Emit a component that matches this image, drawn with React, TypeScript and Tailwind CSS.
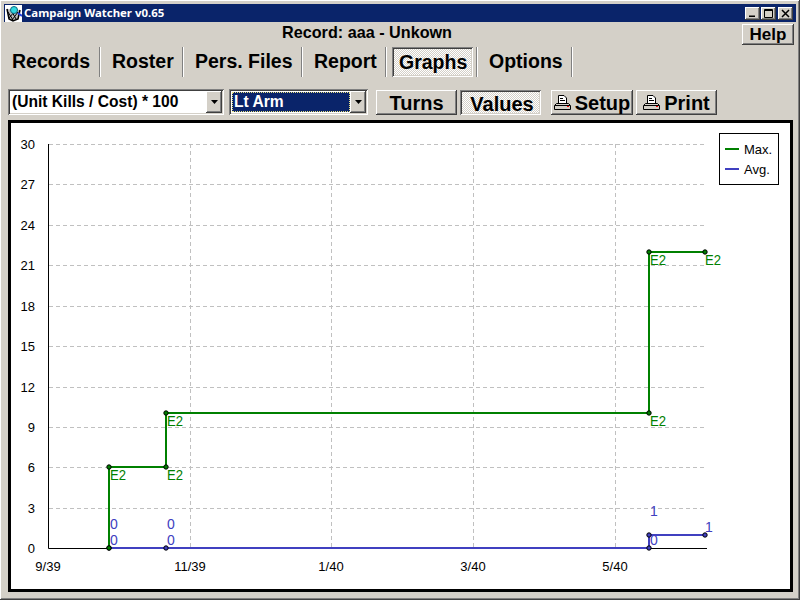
const raised = "shadow-[inset_-1px_-1px_#404040,inset_1px_1px_#ffffff,inset_-2px_-2px_#808080,inset_2px_2px_#d4d0c8]";
const sunken = "shadow-[inset_1px_1px_#808080,inset_-1px_-1px_#ffffff,inset_2px_2px_#404040,inset_-2px_-2px_#d4d0c8]";
const dither = "bg-[repeating-conic-gradient(#ffffff_0_25%,#d4d0c8_0_50%)] bg-[length:2px_2px]";
const bold = "font-['Liberation_Sans',Arial,sans-serif] font-bold text-black";

function Printer() {
  return (
    <svg width="17" height="15" viewBox="0 0 17 15" className="shrink-0">
      <path d="M4.5 .5H10L12.5 3V8.5H4.5Z" fill="#fff" stroke="#000" />
      <path d="M6 3.5H9M6 5.5H11" stroke="#000" />
      <path d="M2.5 8.5H14.5L16.5 10.5V14.5H.5V10.5Z" fill="#d4d0c8" stroke="#000" />
      <path d="M1 10.5H16" stroke="#000" />
      <rect x="13" y="11" width="2" height="1" fill="#f00" />
    </svg>
  );
}

function AppIcon() {
  return (
    <svg width="17" height="17" viewBox="0 0 17 17" className="shrink-0">
      <rect width="17" height="17" fill="#fff" />
      <path d="M2 4L4 14L8 16L13 14L15 5" fill="#bbb" stroke="#000" strokeWidth="1.5" />
      <path d="M3 7L8 15M6 5L11 14M13 7L7 15M10 6L4 13" stroke="#000" />
      <circle cx="9" cy="5" r="3.5" fill="#30d8e0" stroke="#106880" />
      <path d="M13 8L17 11" stroke="#2040e0" strokeWidth="2" />
    </svg>
  );
}

function CaptionButton({ children }: { children: React.ReactNode }) {
  return (
    <div className={`w-[15px] h-[13px] bg-[#d4d0c8] ${raised} flex items-center justify-center`}>
      <svg width="15" height="13" viewBox="0 0 15 13">{children}</svg>
    </div>
  );
}

function Combo({ text, width, selected }: { text: string; width: string; selected?: boolean }) {
  return (
    <div className={`${width} h-[26px] bg-white ${sunken} p-[2px] flex`}>
      <div className={`flex-1 flex items-center text-[15.6px] leading-none pl-[2px] ${bold} ${selected ? "!text-white bg-[#0a246a] outline-1 outline-dotted outline-[#e8e080] -outline-offset-1 ml-[1px] my-[1px]" : ""}`}>
        {text}
      </div>
      <div className={`w-[16px] bg-[#d4d0c8] ${raised} flex items-center justify-center`}>
        <svg width="7" height="4" viewBox="0 0 7 4"><path d="M0 0H7L3.5 4Z" fill="#000" /></svg>
      </div>
    </div>
  );
}

function Btn({ children, width, ml, active }: { children: React.ReactNode; width: string; ml: string; active?: boolean }) {
  return (
    <div className={`${width} ${ml} h-[25px] flex items-center justify-center gap-[4px] text-[20px] leading-none ${bold} ${active ? `${dither} ${sunken} pl-[3px] pt-[3px]` : `bg-[#d4d0c8] ${raised} pt-[1px]`}`}>
      {children}
    </div>
  );
}

const tabs = [
  { t: "Records", w: "w-[93px]", pad: "pl-[4px]" },
  { t: "Roster", w: "w-[83px]", pad: "pl-[11px]" },
  { t: "Pers. Files", w: "w-[119px]", pad: "pl-[11px]" },
  { t: "Report", w: "w-[84px]", pad: "pl-[11px]" },
  { t: "Graphs", w: "w-[91px]", pad: "pl-[7px] ml-[5px]", active: true },
  { t: "Options", w: "w-[95px]", pad: "pl-[11px]" },
];

const yTicks = [30, 27, 24, 21, 18, 15, 12, 9, 6, 3, 0];
const yPos = [144, 184, 225, 265, 306, 346, 387, 427, 467, 508, 548];
const xTicks = [
  { x: 48, t: "9/39" },
  { x: 190, t: "11/39" },
  { x: 331, t: "1/40" },
  { x: 473, t: "3/40" },
  { x: 615, t: "5/40" },
];
const green = "#008000";
const blue = "#4040c0";
const gPts = [[109, 467], [166, 467], [166, 413], [649, 413], [649, 252], [705, 252]];
const bPts = [[109, 548], [166, 548], [649, 548], [649, 535], [705, 535]];
const gLabels = [[110, 480], [167, 480], [167, 426], [650, 426], [650, 265], [705, 265]];
const bLabels: [number, number, string][] = [
  [110, 529, "0"], [110, 545, "0"], [167, 529, "0"], [167, 545, "0"],
  [650, 516, "1"], [705, 532, "1"], [650, 545, "0"],
];

function Chart() {
  return (
    <svg viewBox="11 123 779 466" width="779" height="466" className="block" fontFamily="'Liberation Sans', Arial, sans-serif" fontSize="13">
      <rect x="11" y="123" width="779" height="466" fill="#fff" />
      {yPos.slice(0, -1).map((y) => (
        <path key={y} d={`M49 ${y + 0.5}H705`} stroke="#c0c0c0" strokeDasharray="4 3" />
      ))}
      {xTicks.slice(1).map((t) => (
        <path key={t.x} d={`M${t.x + 0.5} 144V548`} stroke="#c0c0c0" strokeDasharray="4 3" />
      ))}
      <path d="M48.5 144V548.5H707" stroke="#000" fill="none" />
      {yTicks.map((v, i) => (
        <text key={v} x="35" y={yPos[i] + 5} textAnchor="end" fill="#000">{v}</text>
      ))}
      {xTicks.map((t) => (
        <text key={t.x} x={t.x} y="571" textAnchor="middle" fill="#000">{t.t}</text>
      ))}
      <path d="M109 548V467H166V413H649V252H705" fill="none" stroke={green} strokeWidth="2" />
      <path d="M109 548H649V535H705" fill="none" stroke={blue} strokeWidth="2" />
      {bPts.map(([x, y]) => (
        <circle key={`b${x}${y}`} cx={x} cy={y} r="2.2" fill={blue} stroke="#000" />
      ))}
      {gPts.map(([x, y]) => (
        <circle key={`g${x}${y}`} cx={x} cy={y} r="2.2" fill={green} stroke="#000" />
      ))}
      <circle cx="109" cy="548" r="2.2" fill={green} stroke="#000" />
      {gLabels.map(([x, y]) => (
        <text key={`l${x}${y}`} x={x} y={y} fill={green} fontSize="14" textLength="16" lengthAdjust="spacingAndGlyphs">E2</text>
      ))}
      {bLabels.map(([x, y, t]) => (
        <text key={`m${x}${y}`} x={x} y={y} fill={blue} fontSize="14">{t}</text>
      ))}
      <rect x="719.5" y="133.5" width="59" height="51" fill="#fff" stroke="#000" />
      <path d="M725 149H739" stroke={green} strokeWidth="2" />
      <path d="M725 169H739" stroke={blue} strokeWidth="2" />
      <text x="744" y="154" fill="#000">Max.</text>
      <text x="744" y="174" fill="#000">Avg.</text>
    </svg>
  );
}

export default function App() {
  return (
    <div className={`w-[800px] h-[600px] bg-[#d4d0c8] p-[4px] overflow-hidden ${raised}`}>
      <div className="h-[18px] bg-[#0a246a] flex items-center pl-[1px] pr-[3px]">
        <AppIcon />
        <span className="ml-[2px] text-[11.4px] leading-none text-white font-bold font-['Noto_Sans',sans-serif]">Campaign Watcher v0.65</span>
        <div className="ml-auto flex">
          <CaptionButton><path d="M4 10H10V8.500H4Z" fill="#000" /></CaptionButton>
          <div className="w-[1px]" />
          <CaptionButton><path d="M3.500 2.500H11.500V10.500H3.500ZM3.500 3.500H11.500" fill="none" stroke="#000" /></CaptionButton>
          <div className="w-[2px]" />
          <CaptionButton><path d="M4 3L11 10M11 3L4 10" stroke="#000" strokeWidth="1.500" /></CaptionButton>
        </div>
      </div>
      <div className="h-[23px] flex pl-[278px] pr-[2px]">
        <span className={`text-[16.2px] leading-[21px] ${bold}`}>Record: aaa - Unkown</span>
        <div className={`ml-auto mt-[2px] w-[52px] h-[21px] ${raised} flex items-center justify-center text-[17px] leading-none pb-[1px] ${bold}`}>Help</div>
      </div>
      <div className="h-[31px] mt-[2px] flex pl-[4px]">
        {tabs.map((tab) => (
          <div key={tab.t} className={`${tab.w} h-[30px] flex shadow-[inset_-1px_0_#ffffff] relative`}>
            <div className="absolute right-[1px] top-0 bottom-0 w-[1px] bg-[#808080]" />
            <div className={`mr-[5px] flex-1 flex items-center text-[19.5px] leading-none ${tab.pad} ${bold} ${tab.active ? `${dither} ${sunken} pt-[2px]` : ""}`}>
              {tab.t}
            </div>
          </div>
        ))}
      </div>
      <div className="mt-[11px] h-[26px] flex items-center pl-[4px]">
        <Combo text="(Unit Kills / Cost) * 100" width="w-[216px]" />
        <div className="ml-[5px]"><Combo text="Lt Arm" width="w-[139px]" selected /></div>
        <Btn width="w-[81px]" ml="ml-[8px]">Turns</Btn>
        <Btn width="w-[81px]" ml="ml-[3px]" active>Values</Btn>
        <Btn width="w-[82px]" ml="ml-[10px]"><Printer />Setup</Btn>
        <Btn width="w-[81px]" ml="ml-[3px]"><Printer />Print</Btn>
      </div>
      <div className="mt-[5px] ml-[4px] w-[785px] h-[472px] border-[3px] border-black">
        <Chart />
      </div>
    </div>
  );
}
